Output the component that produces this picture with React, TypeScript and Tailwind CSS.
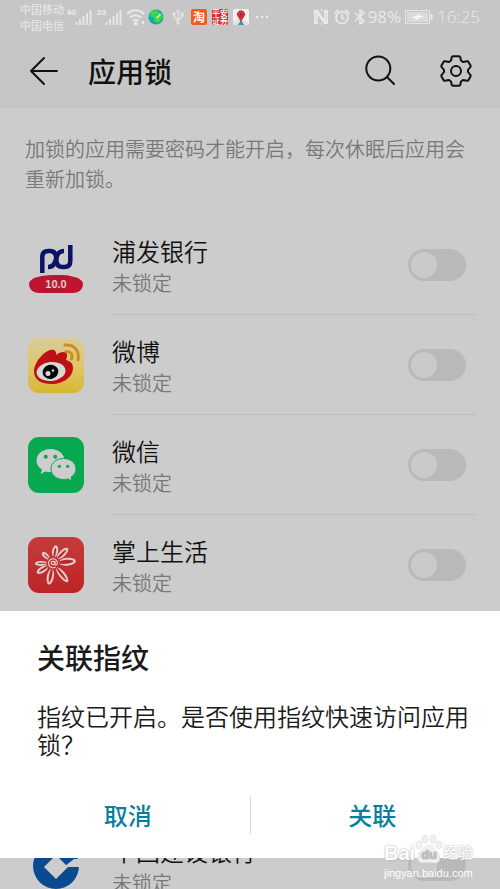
import React from 'react';

const BankLogo = () => (
  <svg viewBox="0 0 56 56" className="h-14 w-14" aria-hidden="true">
    <g fill="none" stroke="#0b1268" strokeWidth="4.500">
      <path d="M14.300 36V20q0-6 6-6h2c5 0 6 4 6 8s1 8 6 8h2q6 0 6-6V8" />
      <path d="M36 14c-4 0-6 2-7 5l-2 6c-1 3-3 5-7 5" />
    </g>
    <path d="M1 47C2 40 14 38 28 38s26 2 27 9c0 5-4 9-10 9H11c-6 0-10-4-10-9z" fill="#c0152f" />
    <path d="M15 51l13-13h13l-8 18H18z" fill="#a81530" opacity=".5" />
    <text x="28" y="51" textAnchor="middle" fontSize="11" fontWeight="700" fontFamily="Liberation Sans" fill="#e3cdd0">10.0</text>
  </svg>
);

const WeiboLogo = () => (
  <svg viewBox="0 0 56 56" className="h-14 w-14" aria-hidden="true">
    <defs>
      <linearGradient id="weibo" x1="0" y1="0" x2="0" y2="1">
        <stop offset="0" stopColor="#d8cb9e" />
        <stop offset=".5" stopColor="#dfc76a" />
        <stop offset="1" stopColor="#d8b632" />
      </linearGradient>
    </defs>
    <rect width="56" height="56" rx="11" fill="url(#weibo)" />
    <path d="M6 34c0-8 9-19 16-21 4-1 7 1 6 5 5-4 12-4 11 1l-1 4c4 1 7 3 7 8 0 9-10 16-21 16S6 43 6 34z" fill="#bd1117" />
    <ellipse cx="23" cy="34.500" rx="14.500" ry="9.500" transform="rotate(-6 23 34)" fill="#d8d8d8" />
    <ellipse cx="22.500" cy="35" rx="8" ry="7" transform="rotate(-15 22 35)" fill="#080808" />
    <circle cx="20" cy="36.500" r="2.500" fill="#d8d8d8" />
    <circle cx="25" cy="33.500" r="1.200" fill="#d8d8d8" />
    <path d="M37 8c9-1 15 6 13 15M38 14.500c5-.5 7 3 5.500 7.500" fill="none" stroke="#cf8e20" strokeWidth="3" strokeLinecap="round" />
  </svg>
);

const WechatLogo = () => (
  <svg viewBox="0 0 56 56" className="h-14 w-14" aria-hidden="true">
    <rect width="56" height="56" rx="11" fill="#07a84f" />
    <path d="M22.500 12C14.500 12 8.500 17 8.500 23.500c0 4 2 7 5.500 9l-1.500 4.500 5-2.500c2 .5 3 .5 5 .5 8 0 14-5 14-11.500S30.500 12 22.500 12z" fill="#cdcdcd" />
    <path d="M35.500 21.500c-7 0-12.500 4.500-12.500 10.500s5.500 10.500 12.500 10.500c1.500 0 3-.2 4.500-.6l4 2.200-1-3.800c3-2 5-4.700 5-8.300 0-6-5.500-10.500-12.500-10.500z" fill="#cdcdcd" stroke="#07a84f" strokeWidth="1" />
    <g fill="#07a84f">
      <circle cx="17.700" cy="19.700" r="2" />
      <circle cx="27.300" cy="19.700" r="2" />
      <circle cx="31.300" cy="29.300" r="1.600" />
      <circle cx="39.700" cy="29.300" r="1.600" />
    </g>
  </svg>
);

const petals = [
  { angle: -80, len: 18, width: 3 },
  { angle: -45, len: 21, width: 3.2 },
  { angle: -5, len: 23, width: 4 },
  { angle: 52, len: 24, width: 3.2 },
  { angle: 101, len: 22, width: 3.5 },
  { angle: 148, len: 19, width: 3 },
  { angle: 178, len: 18, width: 2.5 },
  { angle: 225, len: 15, width: 2.5 },
];

const FlowerLogo = () => (
  <svg viewBox="0 0 56 56" className="h-14 w-14" aria-hidden="true">
    <defs>
      <linearGradient id="flower" x1="0" y1="0" x2="0" y2="1">
        <stop offset="0" stopColor="#c43c3b" />
        <stop offset="1" stopColor="#bd2425" />
      </linearGradient>
    </defs>
    <rect width="56" height="56" rx="11" fill="url(#flower)" />
    <g transform="translate(25 26)">
      {petals.map(({ angle, len, width }) => (
        <g key={angle} transform={`rotate(${angle})`}>
          <ellipse cx={(len + 6) / 2} rx={(len - 6) / 2} ry={width} fill="#e2cccb" />
          <ellipse cx={(len + 3) / 2} rx={(len - 8) / 2} ry={width - 2} fill="#b92a2a" />
        </g>
      ))}
      <circle r="6" fill="#c03232" />
      <circle r="1.700" fill="none" stroke="#e2cccb" strokeWidth="1.200" />
      <path d="M2-2v3c0 2 2.500 1 2.500-1a4.500 4.500 0 1 0-2 4" fill="none" stroke="#e2cccb" strokeWidth="1.200" />
    </g>
  </svg>
);

const ConstructionBankLogo = () => (
  <svg viewBox="0 0 56 56" className="h-14 w-14" aria-hidden="true">
    <circle cx="28" cy="29" r="23" fill="#0a4a90" />
    <path d="M28 18l12 12-12 12-12-12z" fill="#cccccc" />
    <path d="M38 30h14v-8l-6 0-9 7z" fill="#cccccc" />
  </svg>
);

const Signal = ({ label }: { label: string }) => (
  <svg viewBox="0 0 25 18" className="h-[18px] w-[25px]" aria-hidden="true">
    <text x="0" y="7" fontSize="7" fontWeight="700" fontFamily="Liberation Sans" fill="#efefef">{label}</text>
    <path d="M9.500 14v3M13 11v6M16.500 8v9M20 5v12M23.500 2v15" stroke="#e5e5e5" strokeWidth="2" />
  </svg>
);

const StatusBar = () => (
  <div className="flex h-[34px] items-center justify-between px-5 text-[#e9e9e9]">
    <div className="flex items-center">
      <div className="mr-[3px] text-[11px] leading-4">
        <div>中国移动</div>
        <div>中国电信</div>
      </div>
      <Signal label="4G" />
      <span className="w-[5px]" />
      <Signal label="2G" />
      <svg viewBox="0 0 20 18" className="ml-1 h-[18px] w-5" fill="none" stroke="#e9e9e9" strokeWidth="2" aria-hidden="true">
        <path d="M1 6c5-5 12-5 17 0M4 9.500c3-3 8-3 11 0M7 13c1.500-1.500 4-1.500 5.500 0" />
        <circle cx="9.700" cy="15.500" r="1" fill="#e9e9e9" />
        <path d="M17 13v3" />
      </svg>
      <svg viewBox="0 0 16 16" className="ml-0.5 h-4 w-4" aria-hidden="true">
        <circle cx="8" cy="8" r="7.500" fill="#10a7b4" />
        <path d="M3 2l5-1 4 3-3 1-2 4-4-1-1-3z" fill="#35dc50" />
        <path d="M6 9l4-2 4-3 1 5-5 5-4-2z" fill="#3adb35" />
        <path d="M8 8l4-4 1 2-4 4z" fill="#c9ef70" />
      </svg>
      <svg viewBox="0 0 12 16" className="ml-2 h-4 w-3" fill="none" stroke="#e3e3e3" strokeWidth="1.500" aria-hidden="true">
        <path d="M6 14V2M2 6v2l4 4M10 5v3l-4 3" />
        <path d="M4 3l2-3 2 3z" fill="#e3e3e3" stroke="none" />
        <circle cx="2" cy="5" r="1" />
        <circle cx="6" cy="14" r="1" />
        <path d="M9 4h2v2H9z" />
      </svg>
      <span className="ml-[7px] flex h-4 w-4 items-center justify-center rounded-xs bg-[#f15a19] text-[12px] font-bold leading-4 text-white">淘</span>
      <span className="ml-[5px] w-4 break-all rounded-xs bg-[#d82a2d] text-[8px] font-medium leading-[8px] text-white">平安证券</span>
      <svg viewBox="0 0 16 16" className="ml-[5px] h-4 w-4" aria-hidden="true">
        <rect width="16" height="16" rx="2" fill="#f2f2f2" />
        <path d="M0 16v-4l6-2 2 2 3-1 5 3v2z" fill="#d9e6d8" />
        <path d="M5 16l3-5 3 5z" fill="#3889d4" />
        <path d="M8 13L5 8a4 4 0 1 1 6 0z" fill="#d82f38" />
        <circle cx="8" cy="6" r="1.500" fill="#6f3a6c" />
      </svg>
      <svg viewBox="0 0 14 4" className="ml-1.5 h-1 w-3.5" fill="#ededed" aria-hidden="true">
        <circle cx="2" cy="2" r="1.200" />
        <circle cx="7" cy="2" r="1.200" />
        <circle cx="12" cy="2" r="1.200" />
      </svg>
    </div>
    <div className="flex items-center font-['Open_Sans','Noto_Sans_CJK_SC',sans-serif] text-[17px] leading-5">
      <svg viewBox="0 0 16 16" className="mr-[5px] h-4 w-4" aria-hidden="true">
        <path d="M1 1h4l6 9V1h4v14h-4L5 6v9H1z" fill="#e9e9e9" />
        <path d="M3 4v8M13 4v8" stroke="#d2d2d2" strokeWidth="1" />
        <path d="M6 15h3M7 1h3" stroke="#e9e9e9" strokeWidth="1" />
      </svg>
      <svg viewBox="0 0 16 16" className="mr-1 h-4 w-4" fill="none" stroke="#e9e9e9" strokeWidth="1.700" strokeLinecap="round" aria-hidden="true">
        <circle cx="8" cy="8.500" r="6" />
        <path d="M8 5v4l2 1M1 4l3-3M15 4l-3-3" />
      </svg>
      <svg viewBox="0 0 12 16" className="mr-0.5 h-4 w-3" fill="none" stroke="#e9e9e9" strokeWidth="1.600" aria-hidden="true">
        <path d="M1 4l9 8-4 3V1l4 3-9 8" />
      </svg>
      <span>98%</span>
      <svg viewBox="0 0 28 14" className="mx-1 h-3.5 w-7" aria-hidden="true">
        <rect x=".5" y=".5" width="24" height="13" fill="none" stroke="#e5e5e5" />
        <rect x="2" y="2" width="21" height="10" fill="#dadada" />
        <path d="M6 7l6-1V4l7 3-6 1v2z" fill="#f6f6f6" />
        <path d="M26.500 4v6" stroke="#e9e9e9" strokeWidth="2" />
      </svg>
      <span className="font-light">16:25</span>
    </div>
  </div>
);

const Header = () => (
  <header className="flex h-[74px] items-center px-7">
    <button type="button" aria-label="返回">
      <svg viewBox="0 0 32 32" className="h-8 w-8" fill="none" stroke="#111" strokeWidth="2" strokeLinecap="round" strokeLinejoin="round">
        <path d="M16 3L3 16l13 13M3 16h26" />
      </svg>
    </button>
    <h1 className="ml-7 flex-1 text-[28px] font-medium leading-10 text-[#111]">应用锁</h1>
    <button type="button" aria-label="搜索" className="mr-11">
      <svg viewBox="0 0 32 32" className="h-8 w-8" fill="none" stroke="#111" strokeWidth="2" strokeLinecap="round">
        <circle cx="14.300" cy="13.500" r="12" />
        <path d="M23 22l7 7" />
      </svg>
    </button>
    <button type="button" aria-label="设置">
      <svg viewBox="-16 -16 32 32" className="h-8 w-8" fill="none" stroke="#111" strokeWidth="2" strokeLinejoin="round">
        <path d="M-3-14.700Q-4-14.700-4.300-13.500L-5-10.500-7-9-11-9.800Q-12-10-12.500-9L-14.500-5.500Q-15-4.500-14-3.500L-12-1V1L-14 3.500Q-15 4.500-14.500 5.500L-12.500 9Q-12 10-11 9.800L-7 9-5 10.500-4.300 13.500Q-4 14.700-3 14.700H3Q4 14.700 4.300 13.500L5 10.500 7 9 11 9.800Q12 10 12.500 9L14.500 5.500Q15 4.500 14 3.500L12 1V-1L14-3.500Q15-4.500 14.500-5.500L12.500-9Q12-10 11-9.800L7-9 5-10.500 4.300-13.500Q4-14.700 3-14.700z" />
        <circle r="5" />
      </svg>
    </button>
  </header>
);

const AppRow = ({ id, name, logo }: { id: string; name: string; logo: React.ReactNode }) => (
  <li className="flex h-[100px] items-center pl-7 pr-[25px]">
    {logo}
    <div className="ml-7 flex h-full flex-1 items-center justify-between border-b border-[#bdbdbd] pr-[9px]">
      <label htmlFor={id} className="pt-1">
        <span className="block text-[24px] font-[350] leading-8 text-[#111]">{name}</span>
        <span className="block text-[20px] font-[350] leading-8 text-[#787878]">未锁定</span>
      </label>
      <input
        id={id}
        type="checkbox"
        role="switch"
        className="flex h-8 w-[58px] appearance-none items-center rounded-full bg-[#b9b9b9] px-[3px] before:h-[26px] before:w-[26px] before:rounded-full before:bg-[#cacaca] checked:justify-end"
      />
    </div>
  </li>
);

const FingerprintDialog = () => (
  <div role="dialog" aria-labelledby="dialog-title" className="absolute inset-x-0 bottom-[31px] bg-white pb-6 pt-[26px]">
    <h2 id="dialog-title" className="px-[37px] text-[28px] font-medium leading-10 text-[#1a1a1a]">关联指纹</h2>
    <p className="mt-[25px] pl-[37px] pr-6 text-[24px] font-[350] leading-7 text-[#1a1a1a]">指纹已开启。是否使用指纹快速访问应用锁？</p>
    <div className="mt-[38px] flex h-[38px] px-1.5 text-[24px] font-medium text-[#087f9c]">
      <button type="button" className="flex-1">取消</button>
      <span className="w-px bg-[#dcdcdc]" />
      <button type="button" className="flex-1">关联</button>
    </div>
  </div>
);

const Watermark = () => (
  <div className="absolute bottom-2 right-[26px] w-[90px] text-white">
    <div className="flex items-center font-['Liberation_Sans','Noto_Sans_CJK_SC',sans-serif] text-[20px] font-bold leading-6 [text-shadow:0_0_2px_#999]">
      <span>Bai</span>
      <span className="relative flex h-6 w-7 items-end justify-center">
        <svg viewBox="0 0 28 28" className="absolute bottom-0 h-8 w-7" fill="#f1f1f1" stroke="#d2d2d2" strokeWidth=".5" aria-hidden="true">
          <ellipse cx="4" cy="10" rx="3" ry="4" />
          <ellipse cx="10" cy="4" rx="3" ry="4" />
          <ellipse cx="18" cy="4" rx="3" ry="4" />
          <ellipse cx="24" cy="10" rx="3" ry="4" />
          <path d="M14 10c4 0 5 4 8 7s5 11-2 11c-4 0-8-1-12 0-7 0-6-8-3-11s5-7 9-7z" />
        </svg>
        <span className="relative text-[13px] leading-5 text-[#bcbcbc]">du</span>
      </span>
      <span className="text-[15px] font-medium">经验</span>
    </div>
    <div className="whitespace-nowrap font-['Liberation_Sans',sans-serif] text-[11px] leading-4">jingyan.baidu.com</div>
  </div>
);

const App = () => {
  return (
    <div className="relative h-screen overflow-hidden bg-[#cccccc] font-['Noto_Sans_CJK_SC',sans-serif]">
      <div className="bg-[#c6c6c6]">
        <StatusBar />
        <Header />
      </div>
      <main>
        <p className="pb-[21px] pl-[25px] pr-6 pt-[26px] text-[20px] font-[350] leading-[30px] text-[#787878]">
          加锁的应用需要密码才能开启，每次休眠后应用会重新加锁。
        </p>
        <ul>
          <AppRow id="spdb" name="浦发银行" logo={<BankLogo />} />
          <AppRow id="weibo-lock" name="微博" logo={<WeiboLogo />} />
          <AppRow id="wechat" name="微信" logo={<WechatLogo />} />
          <AppRow id="cmb" name="掌上生活" logo={<FlowerLogo />} />
          {/* rows covered by the dialog */}
          <li className="h-[200px]" aria-hidden="true" />
          <AppRow id="ccb" name="中国建设银行" logo={<ConstructionBankLogo />} />
        </ul>
      </main>
      <FingerprintDialog />
      <Watermark />
    </div>
  );
};

export default App;
